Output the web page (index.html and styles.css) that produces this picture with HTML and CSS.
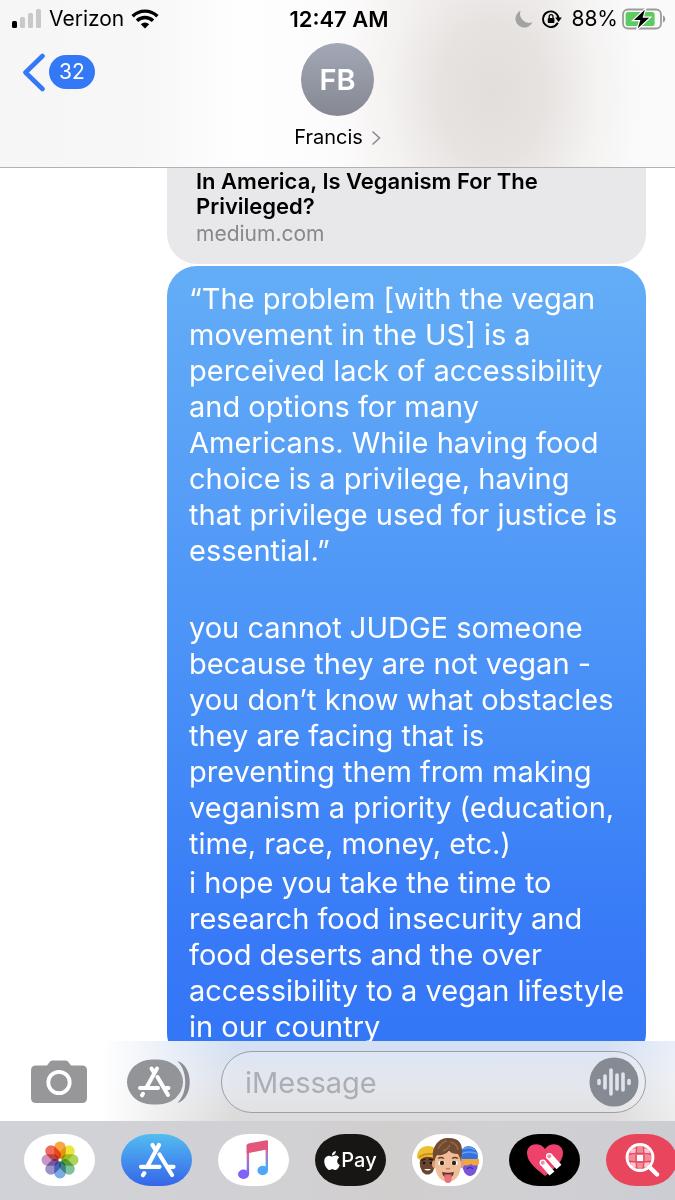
FILE: index.html
```html
<!DOCTYPE html>
<html lang="en">
<head>
<meta charset="utf-8">
<meta name="viewport" content="width=device-width, initial-scale=1">
<title>Messages - Francis</title>
<link rel="stylesheet" href="styles.css">
</head>
<body>
<div class="phone">
  <header class="header">
    <div class="status">
      <div class="status-left">
        <svg class="icon" width="30" height="20" viewBox="0 0 30 20" aria-label="Signal"><rect x="0" y="12" width="5" height="7" rx="1.5" fill="#000"/><g fill="#c9c9cb"><rect x="8" y="8" width="5" height="11" rx="1.5"/><rect x="16" y="4" width="5" height="15" rx="1.5"/><rect x="24" y="0" width="5" height="19" rx="1.5"/></g></svg>
        <span>Verizon</span>
        <svg class="icon" width="28" height="20" viewBox="0 0 28 20" aria-label="Wi-Fi"><g fill="none" stroke="#000" stroke-width="3.4"><path d="M1.6 7.2a17.6 17.6 0 0 1 24.8 0"/><path d="M6 11.8a11.4 11.4 0 0 1 16 0"/></g><path d="M9.8 15.2a6 6 0 0 1 8.4 0L14 19.4z" fill="#000"/></svg>
      </div>
      <time class="clock">12:47 AM</time>
      <div class="status-right">
        <svg class="icon" width="18" height="18" viewBox="0 0 18 18" aria-label="Do not disturb"><path d="M5.6.8A8.800 8.800 0 1 0 17.400 12.200 9 9 0 0 1 5.600.8z" fill="#a3a2a3"/></svg>
        <svg class="icon lock" width="20" height="18" viewBox="0 0 20 18" aria-label="Rotation lock"><path d="M15.800 12.800a7.800 7.800 0 1 1 .8-4.400" fill="none" stroke="#000" stroke-width="1.900"/><path d="M13.200 7.600h6.600l-3.200 4.400z"/><rect x="5.800" y="8" width="6.600" height="5" rx=".8"/><path d="M7.200 8V6.600a1.900 1.900 0 0 1 3.800 0V8" fill="none" stroke="#000" stroke-width="1.300"/></svg>
        <span>88%</span>
        <svg class="icon" width="44" height="22" viewBox="0 0 44 22" aria-label="Battery"><rect x="1" y="1.500" width="38" height="19" rx="5" fill="none" stroke="#9b9b9d" stroke-width="1.800"/><rect x="3.600" y="4" width="29" height="14" rx="2.600" fill="#5dcb5f"/><path d="M41 7.500c3 1 3 6 0 7z" fill="#9b9b9d"/><path d="M22.800 1.800L12 12h6.400l-2.600 8.200L27.200 9.800h-6.600z" fill="#000" stroke="#fff" stroke-width="2.400" paint-order="stroke"/></svg>
      </div>
    </div>
    <nav class="nav">
      <a class="back" href="#" aria-label="Back, 32 unread">
        <svg class="icon" width="24" height="40" viewBox="0 0 24 40"><path d="M20.500 4L3.500 20.500 20.500 37" fill="none" stroke="#3478f6" stroke-width="4.600" stroke-linecap="round" stroke-linejoin="round"/></svg>
        <span class="badge">32</span>
      </a>
      <a class="contact" href="#">
        <span class="avatar">FB</span>
        <span class="name">Francis
          <svg class="icon" width="10" height="16" viewBox="0 0 10 16"><path d="M1.500 1.500L8.500 8l-7 6.500" fill="none" stroke="#8b8b8f" stroke-width="1.600"/></svg>
        </span>
      </a>
    </nav>
  </header>

  <main class="thread">
    <a class="link-card" href="#">
      <strong class="link-title">In America, Is Veganism For The Privileged?</strong>
      <span class="link-host">medium.com</span>
    </a>
    <div class="bubble">
      <p>“The problem [with the vegan movement in the US] is a perceived lack of accessibility and options for many Americans. While having food choice is a privilege, having that privilege used for justice is essential.”</p>
      <p class="spaced">you cannot JUDGE someone because they are not vegan - you don’t know what obstacles they are facing that is preventing them from making veganism a priority (education, time, race, money, etc.)</p>
      <p>i hope you take the time to research food insecurity and food deserts and the over accessibility to a vegan lifestyle in our country</p>
    </div>
  </main>

  <footer class="footer">
    <form class="composer">
      <button class="plain" type="button" aria-label="Camera">
        <svg class="icon" width="56" height="44" viewBox="0 0 56 44"><path d="M5 5.500h11l3-4Q20 .5 22 .5h12q2 0 3 1l3 4h11q5 0 5 5V38q0 5-5 5H5q-5 0-5-5V10.500q0-5 5-5z" fill="#97979a"/><circle cx="28" cy="22.500" r="10.700" fill="none" stroke="#fff" stroke-width="3.800"/></svg>
      </button>
      <button class="plain" type="button" aria-label="Apps">
        <svg class="icon" width="64" height="46" viewBox="0 0 64 46"><path d="M50 2C67 6 67 40 50 44 61 35 61 11 50 2z" fill="#8b8f95"/><rect x="0" y=".5" width="56" height="45" rx="25" ry="22.500" fill="#929498"/><g fill="none" stroke="#fff" stroke-width="4" stroke-linecap="round"><path d="M24.500 9.500l2.800 4.800M30 9.500L19.200 29M13 29h18M37 29h4.500M30.500 18L41 36M16 34.800l-1 1.600"/></g></svg>
      </button>
      <label class="field">
        <input type="text" placeholder="iMessage" aria-label="iMessage">
        <button class="plain" type="button" aria-label="Record audio">
          <svg class="icon" width="50" height="50" viewBox="0 0 50 50"><circle cx="25" cy="25" r="24.500" fill="#868b93"/><g stroke="#dfe3ea" stroke-width="3.600" stroke-linecap="round"><path d="M10 23.500v3M16 19v12M22 13v24M28 18v14M34 17v16M40 23.500v3"/></g></svg>
        </button>
      </label>
    </form>
    <nav class="dock" aria-label="iMessage apps">
      <button class="app photos" type="button" aria-label="Photos">
        <svg class="icon" width="40" height="40" viewBox="-20 -20 40 40">
          <g class="petals"><rect x="-5.800" y="-18.500" width="11.600" height="17.500" rx="5.800" fill="#f8a544"/><rect x="-5.800" y="-18.500" width="11.600" height="17.500" rx="5.800" fill="#ece53c" transform="rotate(45)"/><rect x="-5.800" y="-18.500" width="11.600" height="17.500" rx="5.800" fill="#acd35c" transform="rotate(90)"/><rect x="-5.800" y="-18.500" width="11.600" height="17.500" rx="5.800" fill="#7fc19a" transform="rotate(135)"/><rect x="-5.800" y="-18.500" width="11.600" height="17.500" rx="5.800" fill="#78ace2" transform="rotate(180)"/><rect x="-5.800" y="-18.500" width="11.600" height="17.500" rx="5.800" fill="#9a92cc" transform="rotate(225)"/><rect x="-5.800" y="-18.500" width="11.600" height="17.500" rx="5.800" fill="#c896c4" transform="rotate(270)"/><rect x="-5.800" y="-18.500" width="11.600" height="17.500" rx="5.800" fill="#f06c58" transform="rotate(315)"/></g>
          <circle r="1.500" fill="#fff"/>
        </svg>
      </button>
      <button class="app store" type="button" aria-label="App Store">
        <svg class="icon" width="40" height="36" viewBox="0 0 40 36"><g fill="none" stroke="#fff" stroke-width="4.200" stroke-linecap="round"><path d="M15.500 3l3 5M22 3L10.300 24.500M4 24.800h18.500M30 24.800h6.500M22.500 12.500L35 33M7.300 31.200l-1.300 2"/></g></svg>
      </button>
      <button class="app" type="button" aria-label="Music">
        <svg class="icon" width="34" height="42" viewBox="0 0 34 42"><defs><linearGradient id="note" x1="0" y1="0" x2="0" y2="1"><stop offset="0" stop-color="#e84f6e"/><stop offset=".35" stop-color="#d466a0"/><stop offset=".7" stop-color="#8a74e8"/><stop offset="1" stop-color="#7a5cff"/></linearGradient><linearGradient id="stem" x1="0" y1="0" x2="0" y2="1"><stop offset="0" stop-color="#e84f6e"/><stop offset=".35" stop-color="#d06aa8"/><stop offset=".75" stop-color="#5aa0f0"/><stop offset="1" stop-color="#46aef7"/></linearGradient></defs><ellipse cx="6.500" cy="35.300" rx="5.500" ry="4.700" fill="#8062fa"/><path d="M9.700 6h2.400v29.500H9.700z" fill="url(#note)"/><path d="M28.600 3H31v29h-2.400z" fill="url(#stem)"/><ellipse cx="25.700" cy="31.500" rx="5.300" ry="4.700" fill="#4fa7f5"/><path d="M9.700 6.500q0-1.700 1.800-2.100L29.200 1.200q1.800-.3 1.800 1.300v7.700L9.700 14.500z" fill="#e2567c"/></svg>
      </button>
      <button class="app pay" type="button" aria-label="Apple Pay">
        <svg class="icon" width="16" height="19" viewBox="2 0 20 24"><path fill="#fff" d="M12.152 6.896c-.948 0-2.415-1.078-3.960-1.040-2.040.027-3.910 1.183-4.961 3.014-2.117 3.675-.546 9.103 1.519 12.090 1.013 1.454 2.208 3.090 3.792 3.039 1.520-.065 2.090-.987 3.935-.987 1.831 0 2.350.987 3.960.948 1.637-.026 2.676-1.480 3.676-2.948 1.156-1.688 1.636-3.325 1.662-3.415-.039-.013-3.182-1.221-3.220-4.857-.026-3.040 2.480-4.494 2.597-4.559-1.429-2.090-3.623-2.324-4.390-2.376-2-.156-3.675 1.090-4.610 1.090zM15.530 3.830c.843-1.012 1.400-2.427 1.245-3.830-1.207.052-2.662.805-3.532 1.818-.780.896-1.454 2.338-1.273 3.714 1.338.104 2.715-.688 3.559-1.701"/></svg>
        <span>Pay</span>
      </button>
      <button class="app" type="button" aria-label="Memoji">
        <svg class="icon" width="64" height="48" viewBox="0 0 64 48">
          <ellipse cx="11.500" cy="27" rx="7.800" ry="11.500" fill="#6b4430"/><path d="M1 22q0-12 12-12 8 0 8 10l-1 3Q10 18 4 24z" fill="#efbd32"/><path d="M3 21q8-5 17-2" stroke="#c48d18" stroke-width="1.500" fill="none"/><path d="M5.500 24.500l4-1.500M13 23l4 1" stroke="#24140e" stroke-width="1.300"/><circle cx="8" cy="27" r="1.300" fill="#1c1110"/><circle cx="15" cy="27" r="1.300" fill="#1c1110"/><path d="M8 33q4 3 7 0z" fill="#fff"/>
          <ellipse cx="54" cy="27" rx="8" ry="13" fill="#7656d7"/><path d="M45 20q-1-9 7-10 9 0 10 10l-1 5H46z" fill="#3472df"/><path d="M45 18q8-4 17 0M47 13q7-3 12 1" stroke="#69a0f0" stroke-width="1.500" fill="none"/><path d="M45 23h18v5q-4 3-8 0-5 3-10 0z" fill="#eea83d"/><path d="M51 33q3-3 6 0" stroke="#4e2eae" stroke-width="1.500" fill="none"/>
          <ellipse cx="18.500" cy="28" rx="2.500" ry="4" fill="#dba17b"/><ellipse cx="45.500" cy="28" rx="2.500" ry="4" fill="#dba17b"/><path d="M19 16h26v14q-1 10-7 14-6 4-12 0-6-4-7-14z" fill="#efbd98"/><path d="M18 26q-3-10 1-16Q24 1 33 2q14 0 13 15l-1 9q-1-5-3-8-6 0-9-3-5 5-12 4-2 3-3 7z" fill="#704a32"/><path d="M22 13q3-7 9-8M34 6q7 1 8 8M27 15q5-2 7-6" fill="none" stroke="#946947" stroke-width="1.500"/><path d="M22 22.500q3-2 6 0M36 22.500q3-2 6 0" stroke="#65412b" stroke-width="1.500" fill="none"/><ellipse cx="25.500" cy="27" rx="3.300" ry="2.300" fill="#fff"/><ellipse cx="38.500" cy="27" rx="3.300" ry="2.300" fill="#fff"/><circle cx="26" cy="27" r="2.200" fill="#392219"/><circle cx="38" cy="27" r="2.200" fill="#392219"/><path d="M30 32q2 2 4 0" stroke="#c78063" stroke-width="1.300" fill="none"/><path d="M26 36q6 1.500 12 0-1 6-6 6t-6-6z" fill="#71302d"/><path d="M28.500 38.500h7V43q0 4-3.500 4t-3.500-4z" fill="#e8737c"/>
        </svg>
      </button>
      <button class="app touch" type="button" aria-label="Digital Touch">
        <svg class="icon" width="38" height="34" viewBox="0 0 38 34"><path d="M19 33C12 27 1 20 1 10 1 1 13-2 19 6 25-2 37 1 37 10c0 10-11 17-18 23z" fill="#ef426b"/><g stroke="#fff" stroke-width="6.500"><path d="M23.500 13.500l9.500 10.500M17 20l9 10.500"/></g><g fill="#fff"><circle cx="23.200" cy="13.200" r="3.250"/><circle cx="16.800" cy="19.800" r="3.250"/></g><g fill="#ef8faa"><circle cx="23.200" cy="13.200" r="2"/><circle cx="16.800" cy="19.800" r="2"/></g></svg>
      </button>
      <button class="app search" type="button" aria-label="Images">
        <svg class="icon" width="36" height="36" viewBox="0 0 36 36"><circle cx="16" cy="15.500" r="13" fill="#f28b98"/><path d="M13 13h6v6h-6z" fill="#fff"/><path d="M7 7h6v6H7zM19 7h6v6h-6zM7 19h6v6H7zM19 19h6v6h-6z" fill="#f9c9cf"/><path d="M13 3q-2 12 0 25M19 3q2 12 0 25M3 12.500q13-2 26 0M3 19q13 2 26 0" stroke="#e9455c" stroke-width="1.300" fill="none"/><circle cx="16" cy="15.500" r="13" fill="none" stroke="#fff" stroke-width="2.800"/><path d="M26 25.500l7 7" stroke="#fff" stroke-width="4.400" stroke-linecap="round"/></svg>
      </button>
    </nav>
  </footer>
</div>
</body>
</html>
```
FILE: styles.css
```css
* { box-sizing: border-box; }

body {
  margin: 0;
  background: #fff;
  color: #000;
  font-family: Inter, "Liberation Sans", sans-serif;
}

a { color: inherit; text-decoration: none; }

button, input { font: inherit; }

.icon { display: block; flex: none; }

.phone {
  display: flex;
  flex-direction: column;
  height: 100vh;
}

/* Header */
.header {
  flex: none;
  padding-bottom: 17px;
  border-bottom: 1px solid #b2b1b3;
  background:
    radial-gradient(ellipse 22% 120% at 73% 55%, #e2dedb 0%, #e3dfddd0 35%, #eeebea60 70%, #f3f1f000 100%),
    linear-gradient(90deg, #f6f6f7 0%, #f7f7f8 20%, #fefeff 36%, #fdfcfc 48%, #f6f4f3 62%, #f5f3f2 80%, #fafafa 94%, #fafafa 100%);
}

.status {
  display: grid;
  grid-template-columns: 1fr auto 1fr;
  align-items: center;
  height: 37px;
  padding: 0 9px 0 12px;
  font-size: 21px;
}

.status-left, .status-right {
  display: flex;
  align-items: center;
  gap: 7px;
}

.status-right { justify-content: flex-end; gap: 4px; }

.lock { margin: 0 5px; }

.clock {
  font-size: 22px;
  font-weight: 600;
}

.nav {
  display: grid;
  grid-template-columns: 1fr auto 1fr;
  align-items: start;
  padding: 6px 22px 0;
}

.back {
  display: flex;
  align-items: center;
  justify-self: start;
  gap: 3px;
  margin-top: 9px;
}

.badge {
  padding: 0 10px;
  border-radius: 17px;
  background: #3478f6;
  color: #fff;
  font-size: 21px;
  line-height: 34px;
}

.contact {
  display: flex;
  flex-direction: column;
  align-items: center;
  gap: 9px;
}

.avatar {
  width: 73px;
  border-radius: 50%;
  background: linear-gradient(#a3a8b6, #858892);
  color: #fff;
  font-size: 29px;
  font-weight: 600;
  line-height: 73px;
  text-align: center;
}

.name {
  display: flex;
  align-items: center;
  gap: 8px;
  font-size: 20px;
  line-height: 25px;
}

/* Conversation */
.thread {
  display: flex;
  flex: 1;
  flex-direction: column;
  gap: 2px;
  min-height: 0;
  padding: 0 29px 0 167px;
  overflow: hidden;
}

.link-card, .bubble { flex: none; }

.link-card {
  padding: 1px 29px 16px;
  border-radius: 0 0 30px 30px;
  background: #e8e8ea;
  font-size: 21px;
}

.link-title {
  display: block;
  font-size: 22px;
  font-weight: 600;
  line-height: 25px;
}

.link-host {
  display: block;
  color: #88888c;
  line-height: 29px;
}

.bubble {
  padding: 15px 16px 15px 22px;
  border-radius: 30px;
  background: linear-gradient(#64adf6 0%, #559df7 30%, #478ff7 55%, #3779f7 85%, #3376f6 100%);
  color: #fff;
  font-size: 29px;
  line-height: 36px;
}

.bubble p { margin: 0 0 3px; }

.bubble .spaced { margin-top: 41px; }

/* Message entry */
.footer { flex: none; }

.composer {
  display: flex;
  align-items: center;
  height: 80px;
  padding: 2px 29px 0 31px;
  background:
    linear-gradient(90deg, #fff 0%, #fff 15%, #ffffff00 35%, #ffffff00 90%, #ffffff80 100%),
    linear-gradient(#d3e0f4 0%, #dde1ea 50%, #dcdad9 100%);
}

.plain {
  flex: none;
  padding: 0;
  border: 0;
  background: none;
}

.composer > .plain + .plain { margin-left: 40px; }

.field {
  display: flex;
  flex: 1;
  align-items: center;
  height: 62px;
  min-width: 0;
  margin-left: 30px;
  padding: 0 6px 0 23px;
  border: 1px solid #9d9fa6;
  border-radius: 31px;
  background: #ffffff30;
}

.field input {
  flex: 1;
  min-width: 0;
  padding: 0;
  border: 0;
  outline: 0;
  background: none;
  color: #000;
  font-size: 29px;
}

.field input::placeholder { color: #acaeb3; opacity: 1; }

/* App strip */
.dock {
  display: flex;
  gap: 26px;
  height: 79px;
  padding: 13px 0 0 24px;
  overflow: hidden;
  background: linear-gradient(90deg, #d1d2d7 0%, #d1d1d5 35%, #d1cece 58%, #d0d0d4 80%, #cccdd2 100%);
}

.app {
  display: flex;
  flex: none;
  align-items: center;
  justify-content: center;
  width: 71px;
  height: 52px;
  padding: 0;
  border: 0;
  border-radius: 30px / 26px;
  background: #fff;
}

.petals { isolation: isolate; }

.petals rect { mix-blend-mode: multiply; }

.store { background: linear-gradient(#54bcf0, #3465ea); }

.pay {
  gap: 1px;
  background: #171614;
  color: #fff;
  font-size: 20px;
  font-weight: 500;
}

.touch { background: #000; }

.search { background: #e9455c; }
```
